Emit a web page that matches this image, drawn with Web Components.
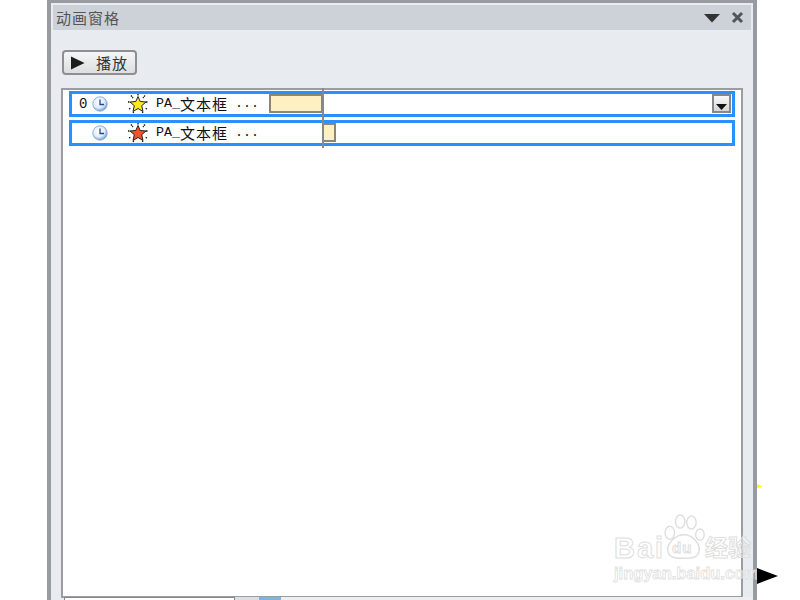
<!DOCTYPE html>
<html lang="zh"><head><meta charset="utf-8"><title>动画窗格</title>
<style>
html,body{margin:0;padding:0;width:800px;height:600px;overflow:hidden;background:#fff}
body{font-family:"Liberation Mono","Noto Sans CJK SC",monospace}
</style></head><body>
<anim-pane>
  <anim-row slot="rows" index="0" color="#ffe81f" bar-left="197" bar-width="54" dropdown></anim-row>
  <anim-row slot="rows" color="#f4502a" bar-left="250" bar-width="14"></anim-row>
</anim-pane>
<baidu-mark></baidu-mark>
<script>
const define=(name,html,extra={})=>{
  customElements.define(name,class extends HTMLElement{
    connectedCallback(){
      if(this.shadowRoot)return;
      const r=this.attachShadow({mode:'open'});
      r.innerHTML=html;
      extra.init&&extra.init(this,r);
    }
  });
};
define('anim-pane',`<style>
:host{display:block;position:relative;box-sizing:border-box;width:710px;height:600px;margin-left:47px;overflow:hidden;background:#e8ebf0;border-left:4px solid #989ca1;border-right:4px solid #989ca1;border-top:3px solid #989ca1}
.title{display:flex;align-items:center;justify-content:space-between;height:25px;margin:2px 2px 0;background:#ccd2d8;padding-left:3px;padding-right:7px;color:#555;font:15px/25px "Noto Sans CJK SC",sans-serif;letter-spacing:1px}
.ctl{display:flex;align-items:center;gap:11px}
.tools{padding:20px 0 0 11px;height:38px;box-sizing:content-box}
.btn{box-sizing:border-box;display:flex;align-items:center;width:75px;height:25px;border:2px solid #8e8f90;border-radius:4px;background:linear-gradient(#f4f5f6,#dcdee0);color:#333;font:15px/21px "Noto Sans CJK SC",sans-serif;letter-spacing:1px;padding-left:6px}
.btn svg{margin-right:11px}
.list{box-sizing:border-box;position:relative;margin:0 10px 0 10px;height:510px;background:#fff;border:2px solid #9a9ea3;padding:1px 6px 0 6px;display:flex;flex-direction:column;gap:3px}
.guide{position:absolute;left:259px;top:-2px;width:2px;height:60px;background:#85898e}
.scroll{position:absolute;left:13px;bottom:0;width:696px;height:3px;display:flex}
.thumb{width:171px;border:1px solid #888;border-bottom:0;background:#fff;box-sizing:border-box}
.track{width:24px;background:#dde0e3}.blue{width:22px;background:#7fb2ec}.rest{flex:1;background:#eceef0}
</style>
<div class="title"><span>动画窗格</span><span class="ctl">
<svg width="16" height="10" viewBox="0 0 16 10"><path d="M0 1H16L8 9.500Z" fill="#333"/></svg>
<svg width="13" height="13" viewBox="0 0 13 13"><path d="M2 2L11 11M11 2L2 11" stroke="#50555a" stroke-width="3"/></svg>
</span></div>
<div class="tools"><div class="btn"><svg width="15" height="14" viewBox="0 0 15 14"><path d="M1 0.500L14.500 7L1 13.500Z" fill="#1c1c1c"/></svg>播放</div></div>
<div class="list"><slot name="rows"></slot><div class="guide"></div></div>
<div class="scroll"><div class="thumb"></div><div class="track"></div><div class="blue"></div><div class="rest"></div></div>`);
define('anim-row',`<style>
:host{display:block;box-sizing:border-box;position:relative;width:666px;height:26px;border:3px solid #2b90ff;background:#fff;font:13.33px/20px "Liberation Mono",monospace;color:#111}
.row{display:flex;align-items:center;height:20px}
.idx{width:10px;margin-left:7px;font-size:14px}
.clock{margin-left:3px;margin-right:20px}
.star{margin-right:8px}
.cjk{font:15px/20px "Noto Sans CJK SC",sans-serif;letter-spacing:1px}
.dots{position:absolute;left:163px;top:0}
.bar{position:absolute;top:0;height:19px;box-sizing:border-box;background:#fff0c4;border:2px solid #8a8678}
.dd{position:absolute;right:1px;top:0;width:19px;height:19px;box-sizing:border-box;border:2px solid #85878a;background:linear-gradient(#fafafa,#d4d4d4);display:flex;align-items:flex-end;justify-content:center;padding-bottom:1px}
</style>
<div class="row"><span class="idx"></span>
<svg class="clock" width="16" height="16" viewBox="0 0 16 16"><defs><radialGradient id="g" cx=".42" cy=".38" r=".7"><stop offset="0" stop-color="#fff"/><stop offset=".55" stop-color="#e2ecfa"/><stop offset="1" stop-color="#4f83c8"/></radialGradient></defs><circle cx="8" cy="8" r="7.200" fill="url(#g)" stroke="#7ea4d6" stroke-width=".8"/><path d="M8 3.500V8.500H12" fill="none" stroke="#23488a" stroke-width="1.300"/></svg>
<svg class="star" width="20" height="20" viewBox="0 0 20 20"><path d="M10 0V2M3 1.500L5 4M17 1.500L15 4M0 8H2M18 8H20M1 15L3 14M19 15L17 14M5 19L6 17.500M15 19L14 17.500" stroke="#111" stroke-width="1.300" stroke-dasharray="1.500 .7"/><polygon class="s" points="10,2.500 12.200,7.500 18,8 13.700,11.700 15,17.500 10,14.500 5,17.500 6.300,11.700 2,8 7.800,7.500" stroke="#222" stroke-width="1"/></svg>
<span>PA_</span><span class="cjk">文本框</span></div>
<span class="dots">...</span>
<div class="bar"></div>`,{init(h,r){
  r.querySelector('.idx').textContent=h.getAttribute('index')||'';
  r.querySelector('.s').setAttribute('fill',h.getAttribute('color'));
  const b=r.querySelector('.bar');
  b.style.left=h.getAttribute('bar-left')+'px';
  b.style.width=h.getAttribute('bar-width')+'px';
  if(h.hasAttribute('dropdown')){
    const d=document.createElement('div');d.className='dd';
    d.innerHTML='<svg width="11" height="6" viewBox="0 0 11 6"><path d="M0 0H11L5.500 6Z" fill="#111"/></svg>';
    r.appendChild(d);
  }
}});
define('baidu-mark',`<style>
:host{display:block;position:absolute;left:0;top:0;width:800px;height:600px;pointer-events:none}
.a{position:absolute;color:rgba(255,255,255,.4);-webkit-text-stroke:1px #dedede}
.bai{left:614px;top:533px;font:700 29px/30px "Liberation Sans",sans-serif;letter-spacing:2px}
.du{left:672px;top:538px;font:700 15px/20px "Liberation Sans",sans-serif;letter-spacing:1px}
.jy{left:705px;top:535px;font:700 23px/22px "Noto Sans CJK SC",sans-serif;letter-spacing:0}
.url{left:614px;top:563.500px;font:700 16.500px/18px "Liberation Sans",sans-serif;-webkit-text-stroke:.8px #e0e0e0}
.paw{left:661px;top:514px}
.tri{left:757px;top:568px}.y{left:757px;top:484px}
</style>
<svg class="a paw" width="44" height="47" viewBox="0 0 46 50" fill="none" stroke="#dedede" stroke-width="1.500"><ellipse cx="9" cy="20" rx="5" ry="7"/><ellipse cx="20" cy="8" rx="5" ry="7"/><ellipse cx="32" cy="9" rx="5" ry="7"/><ellipse cx="41" cy="22" rx="4.500" ry="6"/><path d="M24 22C33 22 42 32 40 40C38 48 29 47 24 47C18 47 9 48 7 40C5 32 15 22 24 22Z"/></svg>
<span class="a bai">Bai</span><span class="a du">du</span><span class="a jy">经验</span>
<span class="a url">jingyan.baidu.com</span>
<svg class="a tri" width="22" height="17" viewBox="0 0 22 17"><path d="M0 0L21 8L0 16Z" fill="#000"/></svg>
<svg class="a y" width="6" height="5" viewBox="0 0 6 5"><path d="M0 0L5 2.500L0 4Z" fill="#ff0"/></svg>`);
</script>
</body></html>
